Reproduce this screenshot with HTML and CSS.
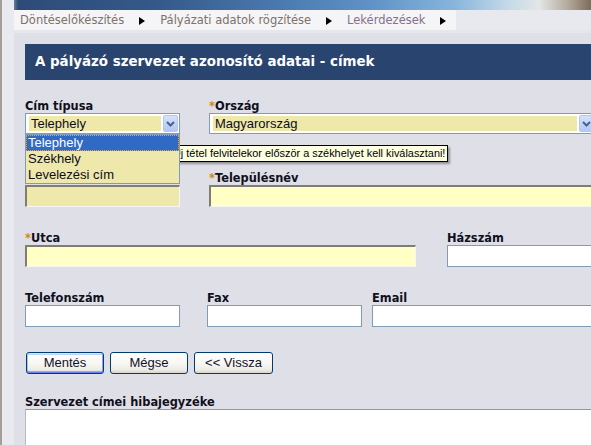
FILE: index.html
```html
<!DOCTYPE html>
<html lang="hu">
<head>
<meta charset="utf-8">
<title>Címek</title>
<link rel="stylesheet" href="styles.css">
</head>
<body>
<div class="page">
  <div class="rail"></div>
  <div class="main">
    <div class="banner"></div>
    <div class="navbar">
      <ul class="crumbs">
        <li class="crumb">Döntéselőkészítés</li><li class="sep"></li>
        <li class="crumb">Pályázati adatok rögzítése</li><li class="sep"></li>
        <li class="crumb visited">Lekérdezések</li><li class="sep"></li>
      </ul>
    </div>
    <div class="content">
      <h1 class="title">A pályázó szervezet azonosító adatai - címek</h1>
      <div class="form">
        <div class="row row-pair">
          <div class="field">
            <div class="label">Cím típusa</div>
            <div class="select">
              <span class="select-value">Telephely</span>
              <span class="select-btn"><svg width="13" height="15" viewBox="0 0 13 15"><path d="M3 6 L6.5 9.5 L10 6" fill="none" stroke="#4d6185" stroke-width="2"/></svg></span>
              <ul class="listbox">
                <li class="option selected">Telephely</li>
                <li class="option">Székhely</li>
                <li class="option">Levelezési cím</li>
              </ul>
            </div>
          </div>
          <div class="field">
            <div class="label"><span class="req">*</span>Ország</div>
            <div class="select">
              <span class="select-value">Magyarország</span>
              <span class="select-btn"><svg width="13" height="15" viewBox="0 0 13 15"><path d="M3 6 L6.5 9.5 L10 6" fill="none" stroke="#4d6185" stroke-width="2"/></svg></span>
            </div>
          </div>
        </div>

        <div class="tooltip">Új tétel felvitelekor először a székhelyet kell kiválasztani!</div>

        <div class="row row-pair row-2">
          <div class="field">
            <div class="label"></div>
            <div class="input inset khaki"></div>
          </div>
          <div class="field">
            <div class="label"><span class="req">*</span>Településnév</div>
            <div class="input inset yellow"></div>
          </div>
        </div>

        <div class="row row-street">
          <div class="field">
            <div class="label"><span class="req">*</span>Utca</div>
            <div class="input inset yellow"></div>
          </div>
          <div class="field">
            <div class="label">Házszám</div>
            <div class="input plain"></div>
          </div>
        </div>

        <div class="row row-contact">
          <div class="field col-1">
            <div class="label">Telefonszám</div>
            <div class="input plain"></div>
          </div>
          <div class="field col-3">
            <div class="label">Fax</div>
            <div class="input plain"></div>
          </div>
          <div class="field col-5">
            <div class="label">Email</div>
            <div class="input plain"></div>
          </div>
        </div>

        <div class="buttons">
          <button class="btn btn-default btn-save">Mentés</button>
          <button class="btn btn-cancel">Mégse</button>
          <button class="btn btn-back">&lt;&lt; Vissza</button>
        </div>

        <div class="label errors-label">Szervezet címei hibajegyzéke</div>
        <div class="errors-box"></div>
      </div>
    </div>
  </div>
</div>
</body>
</html>
```

FILE: styles.css
```css
html, body {
  margin: 0;
  padding: 0;
  background: #dfdfe8;
}

.page {
  display: flex;
  width: 591px;
  height: 445px;
  overflow: hidden;
}

.rail {
  flex: 0 0 12px;
  border-left: 2px solid #a39e98;
  background: #e9eaef;
}

.main {
  flex: 1;
  min-width: 0;
  display: flex;
  flex-direction: column;
  background: #dfdfe8;
}

.banner {
  height: 10px;
  background: linear-gradient(90deg, #6b7f92 0px, #2d4b78 4px, #34598a 25%, #4a78ad 45%, #5f92c6 62%, #86b4dc 76%, #c6dbe8 86%, #e2e6e6 91%, #b3aa9c 96%, #7c6c5c 100%);
}

.navbar {
  height: 20px;
  background: #e8e9ee;
  border-bottom: 3px solid #e6e7ed;
  display: flex;
}

.crumbs {
  list-style: none;
  margin: 0;
  padding: 0 10px 0 6px;
  display: flex;
  align-items: center;
  background: #f5f5f7;
  font-family: "DejaVu Sans", Verdana, sans-serif;
  font-size: 11.5px;
  line-height: 20px;
  color: #7d716a;
}

.crumb.visited {
  color: #84708a;
}

.sep {
  width: 0;
  height: 0;
  margin: 1px 15px 0 15px;
  border-left: 6px solid #000;
  border-top: 4.5px solid transparent;
  border-bottom: 4.5px solid transparent;
}

.sep:last-child {
  margin-right: 0;
}

.content {
  flex: 1;
  padding: 11px 0 0 11px;
  overflow: hidden;
}

.title {
  margin: 0;
  height: 36px;
  padding-left: 10px;
  background: #29446f;
  color: #fff;
  font-family: "DejaVu Sans", Verdana, sans-serif;
  font-weight: bold;
  font-size: 13.4px;
  line-height: 36px;
  white-space: nowrap;
}

.form {
  position: relative;
  margin-top: 20px;
}

.row {
  display: grid;
}

.row-pair {
  grid-template-columns: 155px 387px;
  column-gap: 29px;
}

.row-2 {
  margin-top: 38px;
}

.row-street {
  margin-top: 25px;
  grid-template-columns: 391px 150px;
  column-gap: 31px;
}

.row-contact {
  margin-top: 25px;
  grid-template-columns: 155px 27px 155px 10px 230px;
}

.col-1 { grid-column: 1; }
.col-3 { grid-column: 3; }
.col-5 { grid-column: 5; }

.label {
  height: 13px;
  font-family: "DejaVu Sans", Verdana, sans-serif;
  font-weight: bold;
  font-size: 11.4px;
  line-height: 13px;
  color: #10101c;
  white-space: nowrap;
}

.req {
  color: #c98a1c;
}

.select {
  position: relative;
  box-sizing: border-box;
  height: 21px;
  border: 1px solid #7f9db9;
  padding: 1px;
  background: #fff;
  display: flex;
}

.select-value {
  flex: 1;
  margin: 1px 2px 1px 2px;
  padding-left: 2px;
  background: #eee8aa;
  font-family: "Liberation Sans", Arial, sans-serif;
  font-size: 13px;
  line-height: 15px;
  color: #0c0c20;
  white-space: nowrap;
  overflow: hidden;
}

.select-btn {
  box-sizing: border-box;
  width: 15px;
  border: 1px solid #b4c6f2;
  border-radius: 2px;
  background: linear-gradient(180deg, #d6e2fd 0%, #c3d4fa 50%, #b3c7f5 100%);
  display: flex;
  align-items: center;
  justify-content: center;
}

.listbox {
  position: absolute;
  z-index: 3;
  left: -1px;
  top: 20px;
  width: 155px;
  box-sizing: border-box;
  margin: 0;
  padding: 0;
  list-style: none;
  border: 1px solid #7f9db9;
  background: #eee8aa;
  font-family: "Liberation Sans", Arial, sans-serif;
  font-size: 13px;
  line-height: 16px;
  color: #0c0c20;
}

.option {
  height: 16px;
  padding-left: 2px;
}

.option.selected {
  background: #316ac5;
  color: #fff;
  outline: 1px dotted #e0a848;
  outline-offset: -1px;
}

.tooltip {
  position: absolute;
  z-index: 2;
  left: 144px;
  top: 45px;
  height: 15px;
  padding: 0 2px 0 3px;
  border: 1px solid #000;
  background: #ffffe1;
  box-shadow: 2px 2px 2px rgba(0, 0, 0, 0.35);
  font-family: "Liberation Sans", Arial, sans-serif;
  font-size: 10.9px;
  line-height: 15px;
  color: #000;
  white-space: nowrap;
}

.input {
  box-sizing: border-box;
  height: 22px;
}

.inset {
  border-top: 2px solid #817d73;
  border-left: 2px solid #817d73;
  border-right: 1px solid #f6f6f2;
  border-bottom: 1px solid #f6f6f2;
}

.khaki {
  background: #eee8aa;
}

.yellow {
  background: #ffffc6;
}

.plain {
  border: 1px solid #7f9db9;
  background: #fff;
}

.buttons {
  margin-top: 25px;
  padding-left: 1px;
  display: flex;
  gap: 6px;
}

.btn {
  box-sizing: border-box;
  height: 22px;
  width: 78px;
  padding: 0;
  border: 1px solid #003c74;
  border-radius: 3px;
  background: linear-gradient(180deg, #ffffff 0%, #f7f6f1 55%, #ecebe4 85%, #d8d5c8 100%);
  font-family: "Liberation Sans", Arial, sans-serif;
  font-size: 13px;
  line-height: 20px;
  color: #10102a;
}

.btn-back {
  width: 79px;
}

.btn-default {
  box-shadow: inset 0 1px 0 #cee7ff, inset 0 -1px 0 #6982ee, inset 1px 0 0 #a9c2f5, inset -1px 0 0 #88a4ef, inset 0 2px 0 #bcd4fb, inset 0 -2px 0 #90aaf0;
}

.errors-label {
  margin-top: 22px;
}

.errors-box {
  height: 40px;
  border-top: 1px solid #7f9db9;
  border-left: 1px solid #b8b8c0;
  background: #fff;
}
```
